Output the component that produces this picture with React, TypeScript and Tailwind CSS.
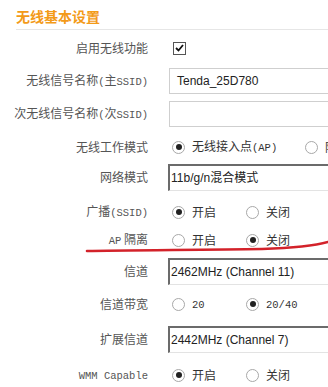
import type { ReactNode } from "react";

type RowProps = {
  label: ReactNode;
  className: string;
  children?: ReactNode;
};

const Row = ({ label, className, children }: RowProps) => (
  <div className={`flex h-[26px] items-center ${className}`}>
    <div className="w-[148px] shrink-0 whitespace-nowrap text-right text-[12px] leading-[14px] text-[#555]">
      {label}
    </div>
    <div className="ml-[21px] flex h-full flex-1 items-center">{children}</div>
  </div>
);

const Mono = ({ children }: { children: ReactNode }) => (
  <span className="font-['Liberation_Mono',monospace] text-[10.5px]">{children}</span>
);

const Radio = ({ checked = false }: { checked?: boolean }) => (
  <span className="flex h-[13px] w-[13px] shrink-0 items-center justify-center rounded-full border border-[#a8a8a8] bg-white">
    {checked && <span className="h-[6px] w-[6px] rounded-full bg-[#222]" />}
  </span>
);

type OptionProps = {
  checked?: boolean;
  width: string;
  children: ReactNode;
};

const Option = ({ checked, width, children }: OptionProps) => (
  <div className={`flex shrink-0 items-center ${width}`}>
    <Radio checked={checked} />
    <span className="ml-[7px] whitespace-nowrap text-[12px] leading-[14px] text-[#333]">{children}</span>
  </div>
);

const TextInput = ({ value }: { value?: string }) => (
  <div className="flex h-[26px] w-[220px] shrink-0 items-center border border-[#cfcfcf] bg-white pl-[7px] font-['Liberation_Sans',Arial,sans-serif] text-[12px] text-[#222]">
    {value}
  </div>
);

const Select = ({ value }: { value: string }) => (
  <div className="-ml-[1px] flex h-[27px] w-[220px] shrink-0 items-center border-t-2 border-l-2 border-r border-b border-t-[#6b6b6b] border-l-[#6b6b6b] border-r-[#ddd] border-b-[#e3e3e3] bg-white pl-[1px] text-[12px] text-[#222]">
    <span className="font-['Liberation_Sans','Noto_Sans_CJK_SC',sans-serif]">{value}</span>
  </div>
);

export default function App() {
  return (
    <div className="relative h-[387px] w-[328px] overflow-hidden bg-white font-['Noto_Sans_CJK_SC',sans-serif]">
      <div className="ml-[16px] h-[30px] border-b border-[#e6e6e6] pt-[3px]">
        <span className="text-[14px] font-bold leading-[20px] text-[#f39a18]">无线基本设置</span>
      </div>

      <Row label="启用无线功能" className="mt-[5px]">
        <span className="ml-[4px] flex h-[13px] w-[13px] items-center justify-center border border-[#555] bg-white">
          <svg width="9" height="8" viewBox="0 0 9 8">
            <path d="M1 4 L3.5 6.5 L8 1" fill="none" stroke="#111" strokeWidth="1.8" />
          </svg>
        </span>
      </Row>

      <Row
        label={
          <>
            无线信号名称<Mono>(</Mono>主<Mono>SSID)</Mono>
          </>
        }
        className="mt-[7px]"
      >
        <TextInput value="Tenda_25D780" />
      </Row>

      <Row
        label={
          <>
            次无线信号名称<Mono>(</Mono>次<Mono>SSID)</Mono>
          </>
        }
        className="mt-[7px]"
      >
        <TextInput />
      </Row>

      <Row label="无线工作模式" className="mt-[7px]">
        <div className="flex pl-[3px]">
          <Option checked width="w-[133px]">
            无线接入点<Mono>(AP)</Mono>
          </Option>
          <Option width="w-[60px]">附加</Option>
        </div>
      </Row>

      <Row label="网络模式" className="mt-[4px]">
        <Select value="11b/g/n混合模式" />
      </Row>

      <Row
        label={
          <>
            广播<Mono>(SSID)</Mono>
          </>
        }
        className="mt-[9px]"
      >
        <div className="flex pl-[3px]">
          <Option checked width="w-[74px]">
            开启
          </Option>
          <Option width="w-[70px]">关闭</Option>
        </div>
      </Row>

      <Row
        label={
          <>
            <Mono>AP</Mono> 隔离
          </>
        }
        className="mt-[2px]"
      >
        <div className="flex pl-[3px]">
          <Option width="w-[74px]">开启</Option>
          <Option checked width="w-[70px]">
            关闭
          </Option>
        </div>
      </Row>

      <Row label="信道" className="mt-[5px]">
        <Select value="2462MHz (Channel 11)" />
      </Row>

      <Row label="信道带宽" className="mt-[7px]">
        <div className="flex pl-[3px]">
          <Option width="w-[74px]">
            <Mono>20</Mono>
          </Option>
          <Option checked width="w-[70px]">
            <Mono>20/40</Mono>
          </Option>
        </div>
      </Row>

      <Row label="扩展信道" className="mt-[9px]">
        <Select value="2442MHz (Channel 7)" />
      </Row>

      <Row label={<Mono>WMM Capable</Mono>} className="mt-[10px]">
        <div className="flex pl-[3px]">
          <Option checked width="w-[74px]">
            开启
          </Option>
          <Option width="w-[70px]">关闭</Option>
        </div>
      </Row>

      {/* hand-drawn red underline */}
      <svg className="pointer-events-none absolute left-0 top-0" width="328" height="387">
        <path
          d="M87 251 C 120 250, 200 250, 262 249 C 292 248, 314 246, 328 242"
          fill="none"
          stroke="#d3222a"
          strokeWidth="2.6"
          strokeLinecap="round"
        />
      </svg>
    </div>
  );
}
